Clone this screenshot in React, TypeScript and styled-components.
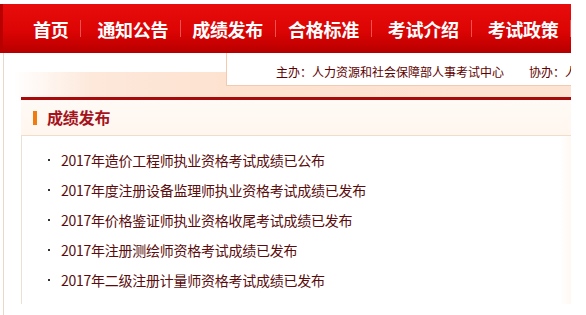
import React from "react";
import styled, { createGlobalStyle } from "styled-components";

const Global = createGlobalStyle`
  html, body { margin: 0; padding: 0; background: #fff; }
  body { font-family: "Noto Sans CJK SC", "Liberation Sans", sans-serif; }
`;

const Page = styled.div`
  width: 571px;
  padding-top: 4px;
  overflow: hidden;
`;

const Nav = styled.nav`
  height: 49px;
  display: flex;
  align-items: center;
  background: linear-gradient(#e90d0d 0%, #dc0404 55%, #c50000 85%, #b30000 100%);
  border-left: 3px solid #b80000;
  box-sizing: border-box;
`;

const NavItem = styled.a<{ $pad: number }>`
  display: flex;
  align-items: center;
  padding-left: ${(p) => p.$pad}px;
  color: #fff;
  font-size: 18px;
  font-weight: 700;
  line-height: 20px;
  text-decoration: none;
  letter-spacing: -0.3px;
  white-space: nowrap;
`;

const NavSep = styled.span`
  display: inline-block;
  width: 1px;
  height: 17px;
  margin-left: 12px;
  background: #f15050;
`;

const Main = styled.div`
  margin-left: 3px;
  border-left: 1px solid #e6d8cc;
  padding-bottom: 14px;
`;

const Banner = styled.div`
  height: 44px;
  display: flex;
  align-items: flex-start;
  background: linear-gradient(90deg, #ffffff 0px, #fff 9px, #fde8da 90px, #fde2d0 220px, #fde3d2 100%);
  background-size: 100% 25px;
  background-position: 0 19px;
  background-repeat: no-repeat;
`;

const BannerSpacer = styled.div`
  width: 222px;
  flex: none;
`;

const InfoBox = styled.div`
  flex: 1;
  min-width: 0;
  height: 33px;
  background: #fff;
  border-left: 1px solid #f3c9b0;
  border-bottom: 1px solid #f3c9b0;
  box-sizing: border-box;
  display: flex;
  align-items: center;
  padding-left: 49px;
  padding-top: 5px;
  font-size: 12px;
  color: #5e0000;
  white-space: nowrap;
  overflow: hidden;
`;

const InfoText = styled.span<{ $gap?: number }>`
  margin-left: ${(p) => p.$gap ?? 0}px;
  flex: none;
`;

const Panel = styled.section`
  margin-left: 17px;
  border-top: 3px solid #a80a0a;
  background: linear-gradient(90deg, #fff 0%, #fff 98%, #fff8f2 100%);
`;

const PanelHead = styled.div`
  height: 35px;
  display: flex;
  align-items: center;
  padding-left: 12px;
  background: linear-gradient(#fffaf6, #fff6ee);
  border-bottom: 1px solid #f2dccb;
`;

const HeadMark = styled.span`
  width: 4px;
  height: 14px;
  background: #f07c10;
  margin-right: 10px;
  margin-top: 1px;
`;

const HeadTitle = styled.h2`
  margin: 0;
  font-size: 16px;
  font-weight: 700;
  color: #a5141c;
  letter-spacing: -0.2px;
  margin-top: -2px;
`;

const List = styled.ul`
  list-style: none;
  margin: 0;
  padding: 9px 0 9px 26px;
  border-left: 1px solid #ece0d6;
`;

const Item = styled.li`
  display: flex;
  align-items: center;
  height: 30px;
  font-size: 14px;
  color: #5a0c0c;
  letter-spacing: -0.25px;
`;

const Dot = styled.span`
  width: 2px;
  height: 2px;
  background: #333;
  margin-right: 11px;
  flex: none;
`;

const navItems = [
  { t: "首页", pad: 30 },
  { t: "通知公告", pad: 16 },
  { t: "成绩发布", pad: 11 },
  { t: "合格标准", pad: 12 },
  { t: "考试介绍", pad: 16 },
  { t: "考试政策", pad: 16 },
];

const news = [
  "2017年造价工程师执业资格考试成绩已公布",
  "2017年度注册设备监理师执业资格考试成绩已发布",
  "2017年价格鉴证师执业资格收尾考试成绩已发布",
  "2017年注册测绘师资格考试成绩已发布",
  "2017年二级注册计量师资格考试成绩已发布",
];

export default function App() {
  return (
    <Page>
      <Global />
      <Nav>
        {navItems.map((n) => (
          <NavItem key={n.t} $pad={n.pad}>
            {n.t}
            <NavSep />
          </NavItem>
        ))}
      </Nav>
      <Main>
        <Banner>
          <BannerSpacer />
          <InfoBox>
            <InfoText>主办：人力资源和社会保障部人事考试中心</InfoText>
            <InfoText $gap={25}>协办：人</InfoText>
          </InfoBox>
        </Banner>
        <Panel>
          <PanelHead>
            <HeadMark />
            <HeadTitle>成绩发布</HeadTitle>
          </PanelHead>
          <List>
            {news.map((s) => (
              <Item key={s}>
                <Dot />
                {s}
              </Item>
            ))}
          </List>
        </Panel>
      </Main>
    </Page>
  );
}
